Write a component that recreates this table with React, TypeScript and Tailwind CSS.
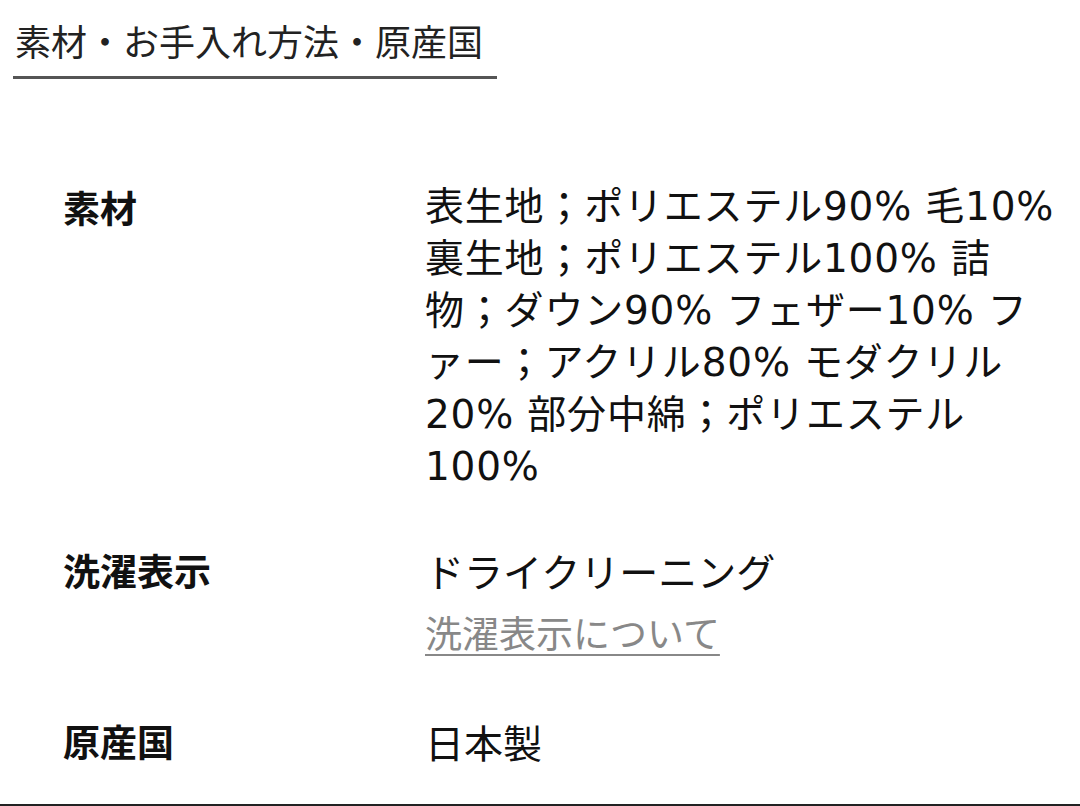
const SPEC_ROWS = [
  {
    label: "素材",
    lines: [
      "表生地；ポリエステル90% 毛10%",
      "裏生地；ポリエステル100% 詰",
      "物；ダウン90% フェザー10% フ",
      "ァー；アクリル80% モダクリル",
      "20% 部分中綿；ポリエステル",
      "100%",
    ],
  },
];

export default function App() {
  return (
    <div
      className="relative w-[1080px] h-[806px] overflow-hidden bg-white text-[#111]"
      style={{ fontFamily: '"Noto Sans CJK JP", "Noto Sans", sans-serif' }}
    >
      {/* Tab heading */}
      <div className="pl-[13px] pt-[16px]">
        <div className="inline-block w-[484px] border-b-[3px] border-[#555] pb-[12px]">
          <h2 className="pl-[2px] text-[36px] leading-[48px] font-normal text-[#222]">
            素材・お手入れ方法・原産国
          </h2>
        </div>
      </div>

      {/* Spec list */}
      <dl className="pl-[63px] pt-[102px]">
        {SPEC_ROWS.map((row) => (
          <div key={row.label} className="flex">
            <dt className="w-[362px] shrink-0 text-[37px] leading-[52px] font-bold">{row.label}</dt>
            <dd
              className="text-[39px] leading-[52px] whitespace-nowrap tracking-[0.8px]"
              style={{ fontFamily: '"DejaVu Sans", "Noto Sans CJK JP", sans-serif' }}
            >
              {row.lines.map((l) => (
                <div key={l}>{l}</div>
              ))}
            </dd>
          </div>
        ))}

        <div className="flex mt-[51px]">
          <dt className="w-[362px] shrink-0 text-[37px] leading-[52px] font-bold">洗濯表示</dt>
          <dd className="text-[39px] leading-[52px]">
            <div>ドライクリーニング</div>
            <a className="block mt-[10px] text-[37px] leading-[52px] text-[#888] underline underline-offset-[6px] decoration-[2px]">
              洗濯表示について
            </a>
          </dd>
        </div>

        <div className="flex mt-[57px]">
          <dt className="w-[362px] shrink-0 text-[37px] leading-[52px] font-bold">原産国</dt>
          <dd className="text-[39px] leading-[52px]">日本製</dd>
        </div>
      </dl>

      {/* bottom edge line */}
      <div className="absolute bottom-0 left-0 right-0 h-[2px] bg-[#222]" />
    </div>
  );
}
